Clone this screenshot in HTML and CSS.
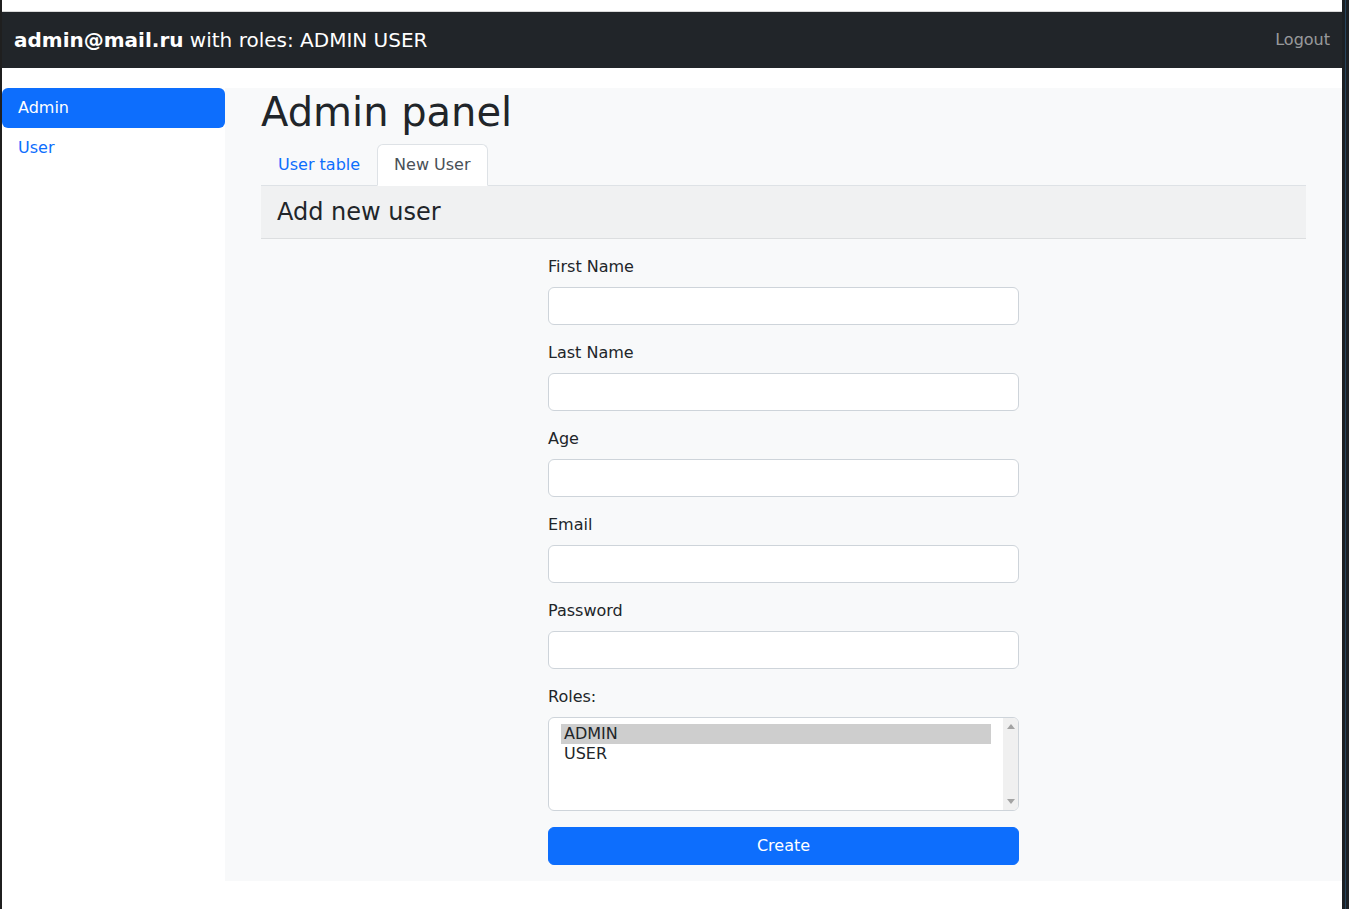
FILE: index.html
```html
<!DOCTYPE html>
<html lang="en">
<head>
<meta charset="utf-8">
<title>Admin panel</title>
<link rel="stylesheet" href="styles.css">
</head>
<body>
<div class="frame-left"></div>
<div class="page">
  <div class="top-strip"></div>
  <nav class="navbar">
    <div class="brand"><b>admin@mail.ru</b> with roles: ADMIN USER</div>
    <a class="logout" href="#">Logout</a>
  </nav>
  <div class="layout">
    <aside class="sidebar">
      <a class="pill active" href="#">Admin</a>
      <a class="pill" href="#">User</a>
    </aside>
    <main class="main">
      <h1 class="title">Admin panel</h1>
      <ul class="tabs">
        <li><a class="tab" href="#">User table</a></li>
        <li><a class="tab active" href="#">New User</a></li>
      </ul>
      <div class="card-header"><h4>Add new user</h4></div>
      <form class="form">
        <div class="group">
          <label class="label">First Name</label>
          <input class="input" type="text">
        </div>
        <div class="group">
          <label class="label">Last Name</label>
          <input class="input" type="text">
        </div>
        <div class="group">
          <label class="label">Age</label>
          <input class="input" type="text">
        </div>
        <div class="group">
          <label class="label">Email</label>
          <input class="input" type="text">
        </div>
        <div class="group">
          <label class="label">Password</label>
          <input class="input" type="password">
        </div>
        <div class="group">
          <label class="label">Roles:</label>
          <div class="listbox">
            <div class="options">
              <div class="option selected">ADMIN</div>
              <div class="option">USER</div>
            </div>
            <div class="scrollbar">
              <span class="arrow up"></span>
              <span class="arrow down"></span>
            </div>
          </div>
        </div>
        <button class="btn" type="button">Create</button>
      </form>
    </main>
  </div>
</div>
<div class="frame-right"><div class="frame-line"></div></div>
</body>
</html>
```

FILE: styles.css
```css
* { box-sizing: border-box; }
html, body { height: 100%; }
body {
  margin: 0;
  display: flex;
  font-family: "DejaVu Sans", "Liberation Sans", sans-serif;
  font-size: 16px;
  line-height: 1.5;
  color: #212529;
  background: #fff;
}
.frame-left { width: 2px; background: #1f1f1f; flex: none; }
.frame-right { width: 7px; background: #1c2024; flex: none; display: flex; justify-content: center; }
.frame-line { width: 1px; background: #25455f; }
.page { flex: 1; min-width: 0; }
.top-strip { height: 12px; border-bottom: 1px solid #d9d9d9; background: #fff; }
.navbar {
  height: 56px;
  background: #212529;
  display: flex;
  align-items: center;
  justify-content: space-between;
  padding: 0 12px;
}
.brand { color: #fff; font-size: 20px; line-height: 30px; }
.logout { color: rgba(255,255,255,.55); text-decoration: none; }
.layout { display: flex; margin-top: 20px; }
.sidebar { width: 223px; flex: none; display: flex; flex-direction: column; }
.pill {
  display: block;
  padding: 8px 16px;
  color: #0d6efd;
  text-decoration: none;
  border-radius: 6px;
}
.pill.active { background: #0d6efd; color: #fff; }
.main { flex: 1; background: #f8f9fa; padding: 0 36px 16px; }
.title { margin: 0 0 8px; font-size: 40px; font-weight: 500; line-height: 1.2; }
.tabs {
  list-style: none;
  margin: 0;
  padding: 0;
  display: flex;
  border-bottom: 1px solid #dee2e6;
}
.tab {
  display: block;
  padding: 8px 16px;
  border: 1px solid transparent;
  border-top-left-radius: 6px;
  border-top-right-radius: 6px;
  margin-bottom: -1px;
  color: #0d6efd;
  text-decoration: none;
}
.tab.active { background: #fff; color: #495057; border-color: #dee2e6 #dee2e6 #fff; }
.card-header {
  background: #f0f1f2;
  border-bottom: 1px solid #dcdee0;
  padding: 12px 16px;
}
.card-header h4 { margin: 0; font-size: 24px; font-weight: 500; line-height: 28px; }
.form { width: 471px; margin: 16px auto 0; }
.group { margin-bottom: 16px; }
.label { display: block; margin-bottom: 8px; }
.input {
  display: block;
  width: 100%;
  height: 38px;
  padding: 6px 12px;
  font: inherit;
  background: #fff;
  border: 1px solid #ced4da;
  border-radius: 6px;
}
.listbox {
  display: flex;
  height: 94px;
  background: #fff;
  border: 1px solid #ced4da;
  border-radius: 6px;
  overflow: hidden;
}
.options { flex: 1; padding: 6px 12px; }
.option { line-height: 20px; padding: 0 3px; color: #212529; }
.option.selected { background: #cecece; }
.scrollbar {
  width: 15px;
  flex: none;
  background: #f0f0f0;
  display: flex;
  flex-direction: column;
  justify-content: space-between;
  align-items: center;
  padding: 6px 0;
}
.arrow { width: 0; height: 0; border-left: 4px solid transparent; border-right: 4px solid transparent; }
.arrow.up { border-bottom: 5px solid #a3a3a3; }
.arrow.down { border-top: 5px solid #a3a3a3; }
.btn {
  display: block;
  width: 100%;
  height: 38px;
  font: inherit;
  color: #fff;
  background: #0d6efd;
  border: 1px solid #0d6efd;
  border-radius: 6px;
}
```
